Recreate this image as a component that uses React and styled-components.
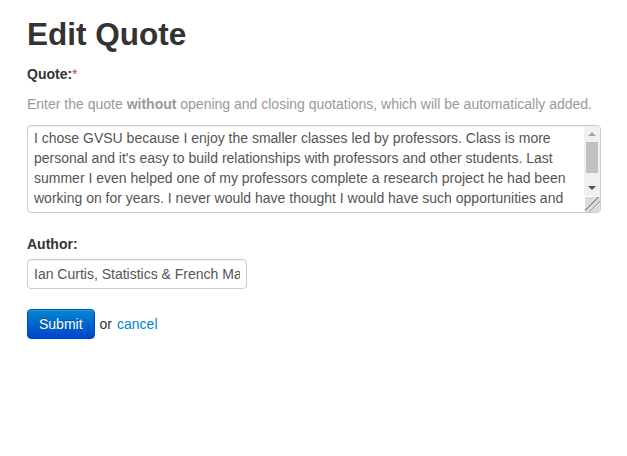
import styled, { createGlobalStyle } from "styled-components"

const Global = createGlobalStyle`
  body {
    margin: 0;
    background: #fff;
    font-family: "Liberation Sans", Arial, sans-serif;
    font-size: 14px;
    line-height: 20px;
    color: #333;
  }
`

const Page = styled.div`
  padding: 14px 27px;
`

const Title = styled.h2`
  margin: 0 0 10px;
  font-size: 31.5px;
  line-height: 40px;
  font-weight: bold;
  color: #333;
`

const Label = styled.label`
  display: block;
  font-size: 14px;
  font-weight: bold;
  line-height: 20px;
  margin-bottom: ${(p) => p.$gap || 10}px;
`

const Required = styled.span`
  color: #b94a48;
  font-weight: normal;
`

const Help = styled.p`
  margin: 0 0 11px;
  color: #999;
  font-size: 14px;
`

const AreaWrap = styled.div`
  position: relative;
  width: 574px;
  margin-bottom: 21px;
`

const QuoteBox = styled.textarea`
  display: block;
  box-sizing: border-box;
  width: 574px;
  height: 88px;
  padding: 2px 6px;
  border: 1px solid #ccc;
  border-radius: 4px;
  font-family: "Liberation Sans", Arial, sans-serif;
  font-size: 14px;
  line-height: 20px;
  color: #555;
  overflow-y: scroll;
  resize: vertical;
  box-shadow: inset 0 1px 1px rgba(0, 0, 0, 0.075);

  &::-webkit-resizer {
    background:
      linear-gradient(135deg, transparent 9px, #999 9px, #999 10px, transparent 10px, transparent 13px, #999 13px, #999 14px, transparent 14px),
      #dcdcdc;
  }
`

const Scrollbar = styled.div`
  position: absolute;
  top: 1px;
  right: 1px;
  bottom: 17px;
  width: 16px;
  display: flex;
  flex-direction: column;
  align-items: center;
  background: #f0f0f0;
  border-top-right-radius: 3px;
  pointer-events: none;
`

const Arrow = styled.div`
  height: 16px;
  width: 100%;
  display: flex;
  align-items: center;
  justify-content: center;
  &::before {
    content: "";
    border-left: 4px solid transparent;
    border-right: 4px solid transparent;
    ${(p) =>
      p.$down
        ? "border-top: 4px solid #505050;"
        : "border-bottom: 4px solid #a3a3a3;"}
  }
`

const Thumb = styled.div`
  width: 12px;
  height: 31px;
  background: #c1c1c1;
`

const Track = styled.div`
  flex: 1;
`

const TextInput = styled.input`
  display: block;
  box-sizing: border-box;
  width: 220px;
  height: 30px;
  padding: 4px 6px;
  border: 1px solid #ccc;
  border-radius: 4px;
  font-family: "Liberation Sans", Arial, sans-serif;
  font-size: 14px;
  color: #555;
  box-shadow: inset 0 1px 1px rgba(0, 0, 0, 0.075);
  margin-bottom: 20px;
`

const Actions = styled.div`
  display: flex;
  align-items: center;
  gap: 5px;
  color: #333;
`

const Button = styled.button`
  height: 30px;
  padding: 0 11px;
  border: 1px solid #0044cc;
  border-radius: 4px;
  background: linear-gradient(to bottom, #0088cc, #0044cc);
  color: #fff;
  font-family: "Liberation Sans", Arial, sans-serif;
  font-size: 14px;
  text-shadow: 0 -1px 0 rgba(0, 0, 0, 0.25);
  box-shadow: inset 0 1px 0 rgba(255, 255, 255, 0.2);
`

const Cancel = styled.a`
  color: #0088cc;
  text-decoration: none;
`

const quote =
  "I chose GVSU because I enjoy the smaller classes led by professors. Class is more personal and it's easy to build relationships with professors and other students. Last summer I even helped one of my professors complete a research project he had been working on for years. I never would have thought I would have such opportunities and experiences as an undergraduate student."

export default function App() {
  return (
    <Page>
      <Global />
      <Title>Edit Quote</Title>
      <Label>
        Quote:<Required>*</Required>
      </Label>
      <Help>
        Enter the quote <b>without</b> opening and closing quotations, which will be automatically added.
      </Help>
      <AreaWrap>
        <QuoteBox defaultValue={quote} />
        <Scrollbar>
          <Arrow />
          <Thumb />
          <Track />
          <Arrow $down />
        </Scrollbar>
      </AreaWrap>
      <Label $gap={5}>Author:</Label>
      <TextInput defaultValue="Ian Curtis, Statistics & French Major" />
      <Actions>
        <Button>Submit</Button>
        or <Cancel href="#">cancel</Cancel>
      </Actions>
    </Page>
  )
}
